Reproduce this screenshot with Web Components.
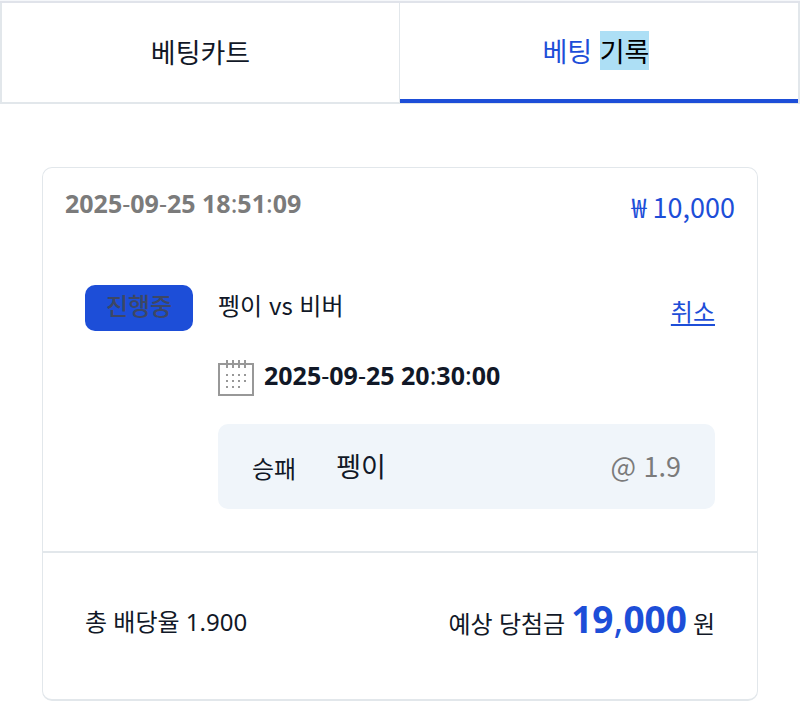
<!DOCTYPE html>
<html lang="ko">
<head>
<meta charset="utf-8">
<meta name="viewport" content="width=device-width, initial-scale=1">
<title>베팅 기록</title>
<style>
  :root {
    --ink: #111827;
    --muted: #7b7b7b;
    --brand: #1d4ed8;
    --line: #e2e7eb;
    --panel: #f0f5fa;
    --latin: "Noto Sans", "Noto Sans CJK KR", sans-serif;
    --date: 25px;
    --lg: 27px;
  }
  body {
    margin: 0;
    background: #fff;
    color: var(--ink);
    font: 24px/36px "Noto Sans CJK KR", "Noto Sans", sans-serif;
  }
  main { padding: 63px 42px 10px; }
  /* separators stay light between the bold digits */
  time span, b span { font-weight: 400; }
  mark { background: #addff5; color: #000; }
</style>
</head>
<body>
  <bet-tabs>
    <bet-tab>베팅카트</bet-tab>
    <bet-tab selected>베팅 <mark>기록</mark></bet-tab>
  </bet-tabs>
  <main>
    <bet-slip>
      <time slot="date" datetime="2025-09-25T18:51:09">2025<span>-</span>09<span>-</span>25 18<span>:</span>51<span>:</span>09</time>
      <span slot="stake">₩ 10,000</span>
      <bet-event>
        <span slot="status">진행중</span>
        <span slot="match">펭이 vs 비버</span>
        <time slot="start" datetime="2025-09-25T20:30:00">2025<span>-</span>09<span>-</span>25 20<span>:</span>30<span>:</span>00</time>
        <bet-pick>
          <span slot="market">승패</span>
          <span slot="choice">펭이</span>
          <span slot="odds">@ 1.9</span>
        </bet-pick>
      </bet-event>
      <bet-total slot="total">
        <span slot="odds">총 배당율 1.900</span>
        <span slot="label">예상 당첨금</span>
        <b slot="payout">19<span>,</span>000</b>
        <span slot="unit">원</span>
      </bet-total>
    </bet-slip>
  </main>

<script>
  // Shared base: clones the markup of each element into an open shadow root
  class BetElement extends HTMLElement {
    connectedCallback() {
      if (this.shadowRoot) return;
      this.attachShadow({ mode: "open" });
      const tpl = document.createElement("template");
      tpl.innerHTML = this.constructor.html;
      this.shadowRoot.append(tpl.content.cloneNode(true));
      this.ready?.();
    }
  }

  // <bet-tabs>: equal width tab bar
  class BetTabs extends BetElement {
    static html = /*html*/ `
      <style>
        :host{display:grid;grid-template-columns:1fr 1fr;padding-top:1px;background:#f5f7fa}
        ::slotted(*){border-top:2px solid #e0e3ea}
      </style>
      <slot></slot>
    `;
    ready() {
      this.setAttribute("role", "tablist");
      this.addEventListener("click", (e) => {
        const tab = e.target.closest("bet-tab");
        if (!tab) return;
        for (const t of this.children) t.toggleAttribute("selected", t === tab);
      });
    }
  }

  // <bet-tab selected>
  class BetTab extends BetElement {
    static observedAttributes = ["selected"];
    static html = /*html*/ `
      <style>
        :host{display:block}
        button{
          display:block;box-sizing:border-box;width:100%;height:101px;padding:0 0 2px;
          font:inherit;font-size:var(--lg);line-height:39px;color:var(--ink);
          background:#fff;cursor:pointer;
          border:solid var(--line);border-width:0 1px 2px;
        }
        :host(:first-child) button{border-left-width:2px}
        :host([selected]) button{
          color:var(--brand);padding:0 6px 6px 0;
          border-width:0 2px 1px 0;
          box-shadow:inset 0 -4px var(--brand);
        }
      </style>
      <button type="button" role="tab"><slot></slot></button>
    `;
    ready() { this.sync(); }
    attributeChangedCallback() { this.sync(); }
    sync() {
      this.shadowRoot
        ?.querySelector("button")
        .setAttribute("aria-selected", String(this.hasAttribute("selected")));
    }
  }

  // <bet-slip>: card with a header, the events and a total
  class BetSlip extends BetElement {
    static html = /*html*/ `
      <style>
        :host{display:block;border:1px solid var(--line);border-bottom-width:2px;border-radius:10px}
        header{display:flex;justify-content:space-between;align-items:flex-start;padding:17px 22px 0}
        ::slotted([slot=date]){font-family:var(--latin);font-size:var(--date);font-weight:700;color:var(--muted)}
        .stake{padding-top:4px;font-size:var(--lg);color:var(--brand)}
        .events{padding:60px 42px 42px}
        footer{border-top:2px solid var(--line);padding:46px 42px 55px}
      </style>
      <article>
        <header>
          <slot name="date"></slot>
          <div class="stake"><slot name="stake"></slot></div>
        </header>
        <div class="events"><slot></slot></div>
        <footer><slot name="total"></slot></footer>
      </article>
    `;
  }

  // <bet-event>: status badge beside the match details
  class BetEvent extends BetElement {
    static html = /*html*/ `
      <style>
        :host{display:grid;grid-template-columns:auto 1fr;column-gap:25px;align-items:start}
        .badge{
          box-sizing:border-box;width:108px;height:46px;padding-bottom:6px;
          display:flex;align-items:center;justify-content:center;
          background:var(--brand);color:#3d4764;border-radius:10px;font-weight:500;
        }
        .top{display:flex;justify-content:space-between;align-items:flex-start}
        .match{padding-top:2px}
        a{margin-top:8px;color:var(--brand);text-decoration:underline;text-underline-offset:3px}
        .when{display:flex;gap:10px;margin:31px 0 28px}
        ::slotted([slot=start]){font-family:var(--latin);font-size:var(--date);font-weight:700;line-height:30px}
      </style>
      <div class="badge"><slot name="status"></slot></div>
      <div>
        <div class="top">
          <div class="match"><slot name="match"></slot></div>
          <a href="#cancel">취소</a>
        </div>
        <div class="when">
          <calendar-icon></calendar-icon>
          <slot name="start"></slot>
        </div>
        <slot></slot>
      </div>
    `;
  }

  class CalendarIcon extends BetElement {
    static html = /*html*/ `
      <style>
        :host{display:block}
        svg{display:block}
      </style>
      <svg width="36" height="36" viewBox="0 0 36 36" fill="none" stroke="#989898" aria-hidden="true">
        <rect x="1" y="4" width="34" height="31" stroke-width="2"/>
        <path d="M9 0v8M15 0v8M21 0v8M27 0v8" stroke-width="2"/>
        <path d="M8 15h20M8 21h20M8 27h14" stroke-width="2" stroke-dasharray="2 4"/>
      </svg>
    `;
  }

  // <bet-pick>: market, choice and odds of one selection
  class BetPick extends BetElement {
    static html = /*html*/ `
      <style>
        :host{
          display:flex;align-items:center;gap:40px;
          padding:21px 34px 23px;border-radius:10px;background:var(--panel);
        }
        .market{padding-top:5px}
        .choice,.odds{font-size:var(--lg);line-height:41px}
        .odds{margin-left:auto;color:var(--muted)}
      </style>
      <div class="market"><slot name="market"></slot></div>
      <div class="choice"><slot name="choice"></slot></div>
      <div class="odds"><slot name="odds"></slot></div>
    `;
  }

  // <bet-total>: combined odds and the expected payout
  class BetTotal extends BetElement {
    static html = /*html*/ `
      <style>
        :host{display:flex;justify-content:space-between;align-items:center;font-family:var(--latin)}
        .payout{display:flex;align-items:baseline;gap:6px;line-height:40px}
        ::slotted([slot=payout]){font-size:37px;color:var(--brand)}
      </style>
      <div><slot name="odds"></slot></div>
      <div class="payout">
        <slot name="label"></slot>
        <slot name="payout"></slot>
        <slot name="unit"></slot>
      </div>
    `;
  }

  customElements.define("calendar-icon", CalendarIcon);
  customElements.define("bet-tabs", BetTabs);
  customElements.define("bet-tab", BetTab);
  customElements.define("bet-pick", BetPick);
  customElements.define("bet-event", BetEvent);
  customElements.define("bet-total", BetTotal);
  customElements.define("bet-slip", BetSlip);
</script>
</body>
</html>
